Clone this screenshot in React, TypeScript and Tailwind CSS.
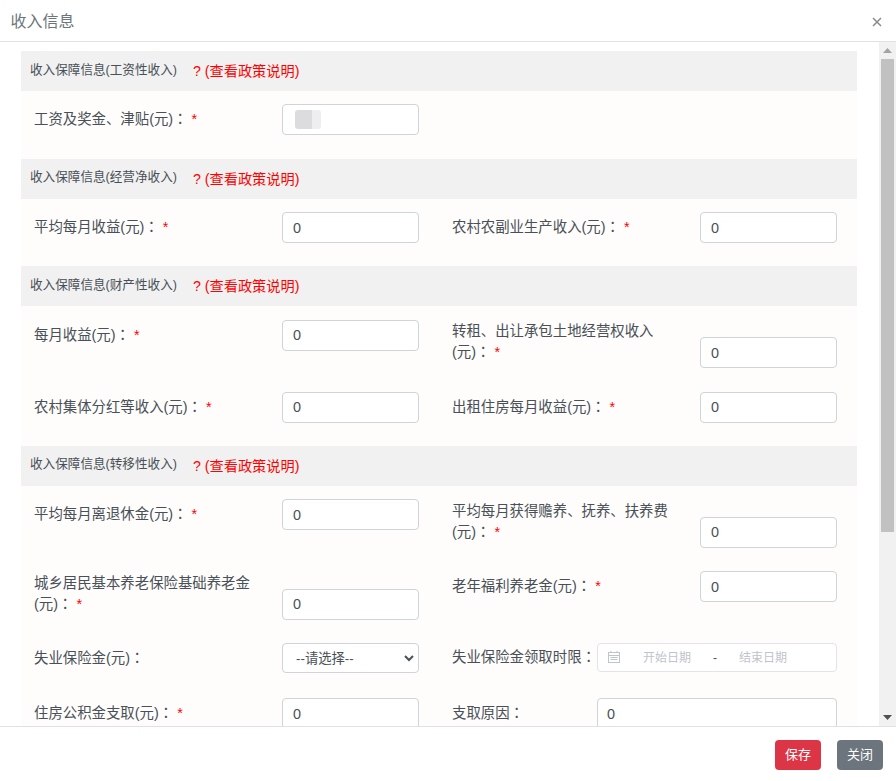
import React from "react";

const Colon = () => <span className="font-['Noto_Sans_CJK_TC','Noto_Sans_CJK_SC',sans-serif] leading-[0]">：</span>;

function Field({ label, req, value }: { label: string; req?: boolean; value?: string }) {
  return (
    <div className="flex items-end">
      <div className="w-[248px] shrink-0 pb-[5px] pr-[16px] pt-[1.5px] text-[14.4px] leading-[21px] text-[#495057]">
        {label}
        <Colon />
        {req && <span className="ml-[4px] leading-[0] text-[#ff0000]">*</span>}
      </div>
      <input
        readOnly
        value={value ?? "0"}
        className="h-[31px] w-[137px] rounded-[4px] border border-[#ced4da] bg-white px-[10px] text-[14.4px] text-[#495057] outline-none"
      />
    </div>
  );
}

function Section({ title, children }: { title: string; children: React.ReactNode }) {
  return (
    <section>
      <div className="flex h-[40px] items-center bg-[#f1f1f1] pl-[9px]">
        <span className="relative top-[-1px] w-[163px] text-[12.6px] text-[#495057]">{title}</span>
        <span className="relative top-[1px] text-[14.2px] text-[#ff0000]">? (查看政策说明)</span>
      </div>
      <div className="grid grid-cols-[418px_1fr] gap-y-[23.5px] bg-[#fefdfc] pb-[23px] pl-[13px] pt-[13.5px]">{children}</div>
    </section>
  );
}

export default function App() {
  return (
    <div className="flex h-[781px] w-[896px] flex-col overflow-hidden bg-white font-['Liberation_Sans','Noto_Sans_CJK_SC',sans-serif]">
      <header className="flex h-[42px] shrink-0 items-center justify-between border-b border-[#dee2e6] pl-[10.5px] pr-[14px]">
        <h1 className="relative top-[1px] text-[16px] font-normal text-[#6c757d]">收入信息</h1>
        <svg width="10" height="10" viewBox="0 0 10 10" className="relative top-[1px] text-[#8a8a8a]">
          <path d="M1 1 L9 9 M9 1 L1 9" stroke="currentColor" strokeWidth="1.5" fill="none" />
        </svg>
      </header>

      <div className="flex min-h-0 flex-1">
        <main className="min-w-0 flex-1 overflow-hidden pl-[21px] pr-[22px] pt-[9px]">
          <Section title="收入保障信息(工资性收入)">
            <div className="relative -mt-[0.5px] mb-[0.5px]">
              <Field label="工资及奖金、津贴(元)" req value="" />
              <div className="absolute left-[261px] top-[6px] flex h-[19px] w-[26px] overflow-hidden rounded-[3px]">
                <span className="w-[17px] bg-[#dcdcdf]" />
                <span className="flex-1 bg-[#eeeef0]" />
              </div>
            </div>
          </Section>
          <Section title="收入保障信息(经营净收入)">
            <Field label="平均每月收益(元)" req />
            <Field label="农村农副业生产收入(元)" req />
          </Section>
          <Section title="收入保障信息(财产性收入)">
            <div className="self-start"><Field label="每月收益(元)" req /></div>
            <Field label="转租、出让承包土地经营权收入(元)" req />
            <Field label="农村集体分红等收入(元)" req />
            <Field label="出租住房每月收益(元)" req />
          </Section>
          <Section title="收入保障信息(转移性收入)">
            <div className="self-start"><Field label="平均每月离退休金(元)" req /></div>
            <Field label="平均每月获得赡养、抚养、扶养费(元)" req />
            <Field label="城乡居民基本养老保险基础养老金(元)" req />
            <div className="self-start"><Field label="老年福利养老金(元)" req /></div>
            <div className="flex h-[31.5px] items-start">
              <div className="w-[248px] shrink-0 pt-[5px] text-[14.4px] leading-[21px] text-[#495057]">失业保险金(元)<Colon /></div>
              <div className="relative h-[30px] w-[137px] rounded-[4px] border border-[#ced4da] bg-white pl-[13px] text-[13.33px] leading-[29px] text-[#495057]">
                --请选择--
                <svg width="10" height="7" viewBox="0 0 10 7" className="absolute right-[4px] top-[11px]">
                  <path d="M1 1 L5 5 L9 1" stroke="#495057" strokeWidth="2" fill="none" />
                </svg>
              </div>
            </div>
            <div className="flex h-[31.5px] items-start">
              <div className="w-[145px] shrink-0 whitespace-nowrap pt-[4px] text-[14.4px] leading-[21px] text-[#495057]">失业保险金领取时限<Colon /></div>
              <div className="flex h-[29px] w-[240px] items-center rounded-[4px] border border-[#e2e4ea] bg-white pl-[10px] text-[12px] text-[#c0c4cc]">
                <svg width="12" height="12" viewBox="0 0 12 12" fill="none" stroke="#c0c4cc" strokeWidth="1" className="relative top-[-1px] shrink-0">
                  <rect x="0.5" y="1.5" width="11" height="10" />
                  <path d="M0.5 4.5 H11.5 M3 0 V2 M9 0 V2 M2.5 6.5 H9.5 M2.5 8.5 H9.5" />
                </svg>
                <span className="ml-[23px]">开始日期</span>
                <span className="ml-[22px] text-[#495057]">-</span>
                <span className="ml-[22px]">结束日期</span>
              </div>
            </div>
            <Field label="住房公积金支取(元)" req />
            <div className="flex items-end">
              <div className="w-[145px] shrink-0 whitespace-nowrap pb-[5px] text-[14.4px] leading-[21px] text-[#495057]">支取原因<Colon /></div>
              <input readOnly value="0" className="h-[31px] w-[240px] rounded-[4px] border border-[#ced4da] bg-white px-[9px] text-[14.4px] text-[#495057] outline-none" />
            </div>
          </Section>
        </main>
        <aside className="flex w-[17px] shrink-0 flex-col items-center bg-[#f1f1f1]">
          <svg width="9" height="5" viewBox="0 0 9 5" className="mt-[6px] fill-[#a3a3a3]"><path d="M4.5 0 L9 5 H0 Z" /></svg>
          <div className="mt-[6px] h-[473px] w-[13px] bg-[#c1c1c1]" />
          <div className="flex-1" />
          <svg width="9" height="5" viewBox="0 0 9 5" className="mb-[6px] fill-[#505050]"><path d="M0 0 H9 L4.5 5 Z" /></svg>
        </aside>
      </div>

      <footer className="flex h-[55px] shrink-0 items-start justify-end gap-[16px] border-t border-[#dee2e6] pr-[13px] pt-[13px]">
        <button className="h-[30px] w-[46px] rounded-[4px] bg-[#dc3545] text-[13px] text-white">保存</button>
        <button className="h-[30px] w-[46px] rounded-[4px] bg-[#6c757d] text-[13px] text-white">关闭</button>
      </footer>
    </div>
  );
}
